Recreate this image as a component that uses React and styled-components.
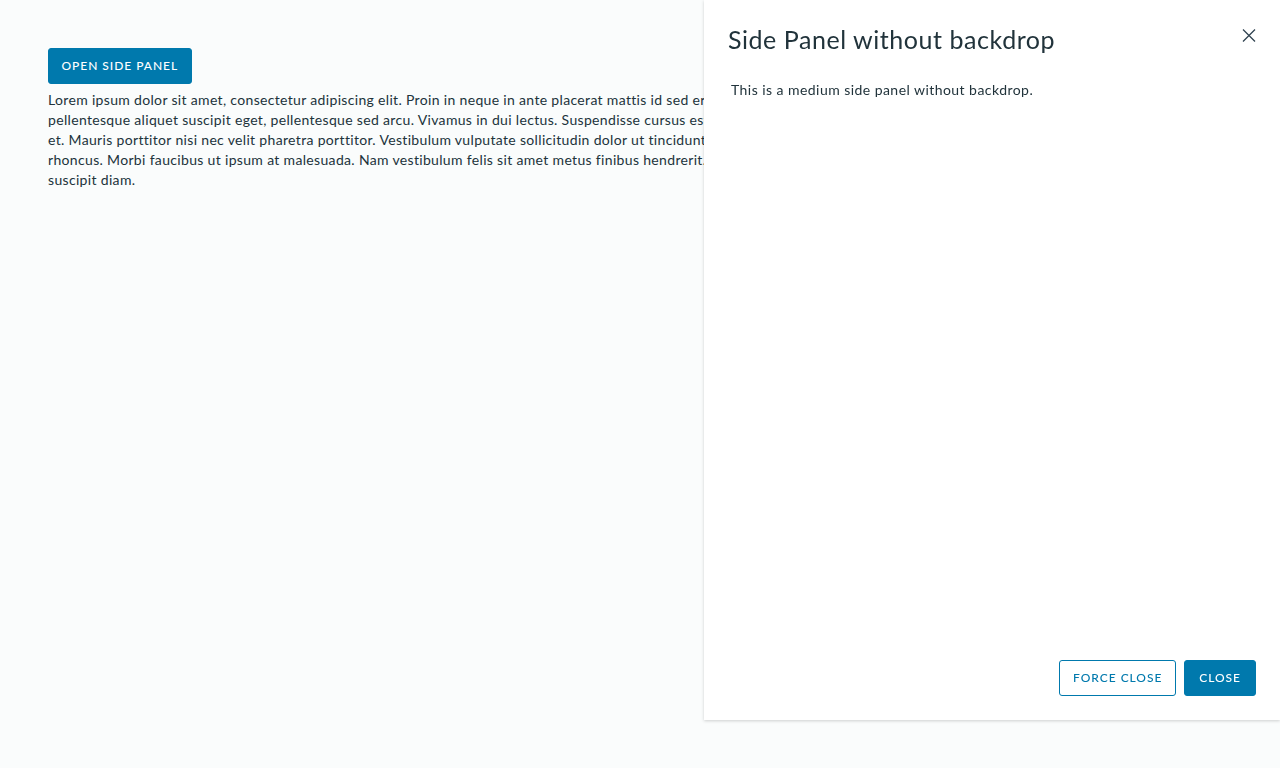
import React, { useState } from 'react';
import styled, { createGlobalStyle } from 'styled-components';

const GlobalStyle = createGlobalStyle`
  html, body {
    margin: 0;
    padding: 0;
    background: #fafcfc;
    font-family: Lato, 'Noto Sans', sans-serif;
    color: #21333b;
  }
`;

const Page = styled.main`
  padding: 48px;
  min-height: 768px;
  box-sizing: border-box;
`;

const Button = styled.button`
  height: 36px;
  padding: 0 ${p => p.$pad || 13}px 2px;
  box-sizing: border-box;
  border-radius: 3px;
  border: 1px solid #0079ad;
  background: ${p => (p.$outline ? '#ffffff' : '#0079ad')};
  color: ${p => (p.$outline ? '#0079ad' : '#ffffff')};
  font-family: Lato, 'Noto Sans', sans-serif;
  font-size: 12px;
  font-weight: 500;
  letter-spacing: 0.08em;
  text-transform: uppercase;
  cursor: pointer;
`;

const Lorem = styled.p`
  margin: 6px 0 0;
  font-size: 14px;
  line-height: 20px;
  letter-spacing: 0.33px;
  white-space: nowrap;
`;

const Panel = styled.aside`
  position: fixed;
  top: 0;
  right: 0;
  width: 576px;
  height: 720px;
  box-sizing: border-box;
  background: #ffffff;
  box-shadow: 0 1px 3px rgba(0, 0, 0, 0.18);
  display: flex;
  flex-direction: column;
  padding: 24px;
`;

const PanelHeader = styled.header`
  display: flex;
  align-items: flex-start;
  justify-content: space-between;
`;

const Title = styled.h2`
  margin: -1px 0 1px;
  font-size: 25px;
  font-weight: 400;
  line-height: 32px;
  letter-spacing: 0.55px;
  color: #21333b;
`;

const CloseIcon = styled.button`
  border: 0;
  background: none;
  padding: 0;
  margin: 4px -1px 0 0;
  width: 16px;
  height: 16px;
  color: #314351;
  cursor: pointer;
`;

const PanelBody = styled.div`
  flex: 1;
  padding: 24px 3px 0;
  font-size: 14px;
  line-height: 20px;
  letter-spacing: 0.45px;
`;

const PanelFooter = styled.footer`
  display: flex;
  justify-content: flex-end;
  gap: 8px;
`;

export default function App() {
  const [open, setOpen] = useState(true);
  return (
    <>
      <GlobalStyle />
      <Page>
        <Button $pad={12.5} onClick={() => setOpen(true)}>Open side panel</Button>
        <Lorem>
          Lorem ipsum dolor sit amet, consectetur adipiscing elit. Proin in neque in ante placerat mattis id sed eros. Nunc
          <br />
          pellentesque aliquet suscipit eget, pellentesque sed arcu. Vivamus in dui lectus. Suspendisse cursus est ac nisl
          <br />
          et. Mauris porttitor nisi nec velit pharetra porttitor. Vestibulum vulputate sollicitudin dolor ut tincidunt. Phasellus
          <br />
          rhoncus. Morbi faucibus ut ipsum at malesuada. Nam vestibulum felis sit amet metus finibus hendrerit. Fusce
          <br />
          suscipit diam.
        </Lorem>
      </Page>
      {open && (
        <Panel>
          <PanelHeader>
            <Title>Side Panel without backdrop</Title>
            <CloseIcon aria-label="close" onClick={() => setOpen(false)}>
              <svg width="16" height="16" viewBox="0 0 16 16" fill="none" stroke="currentColor" strokeWidth="1.3">
                <path d="M2 1.5 L14 13.5 M14 1.5 L2 13.5" />
              </svg>
            </CloseIcon>
          </PanelHeader>
          <PanelBody>This is a medium side panel without backdrop.</PanelBody>
          <PanelFooter>
            <Button $outline onClick={() => setOpen(false)}>Force close</Button>
            <Button $pad={14} onClick={() => setOpen(false)}>Close</Button>
          </PanelFooter>
        </Panel>
      )}
    </>
  );
}
